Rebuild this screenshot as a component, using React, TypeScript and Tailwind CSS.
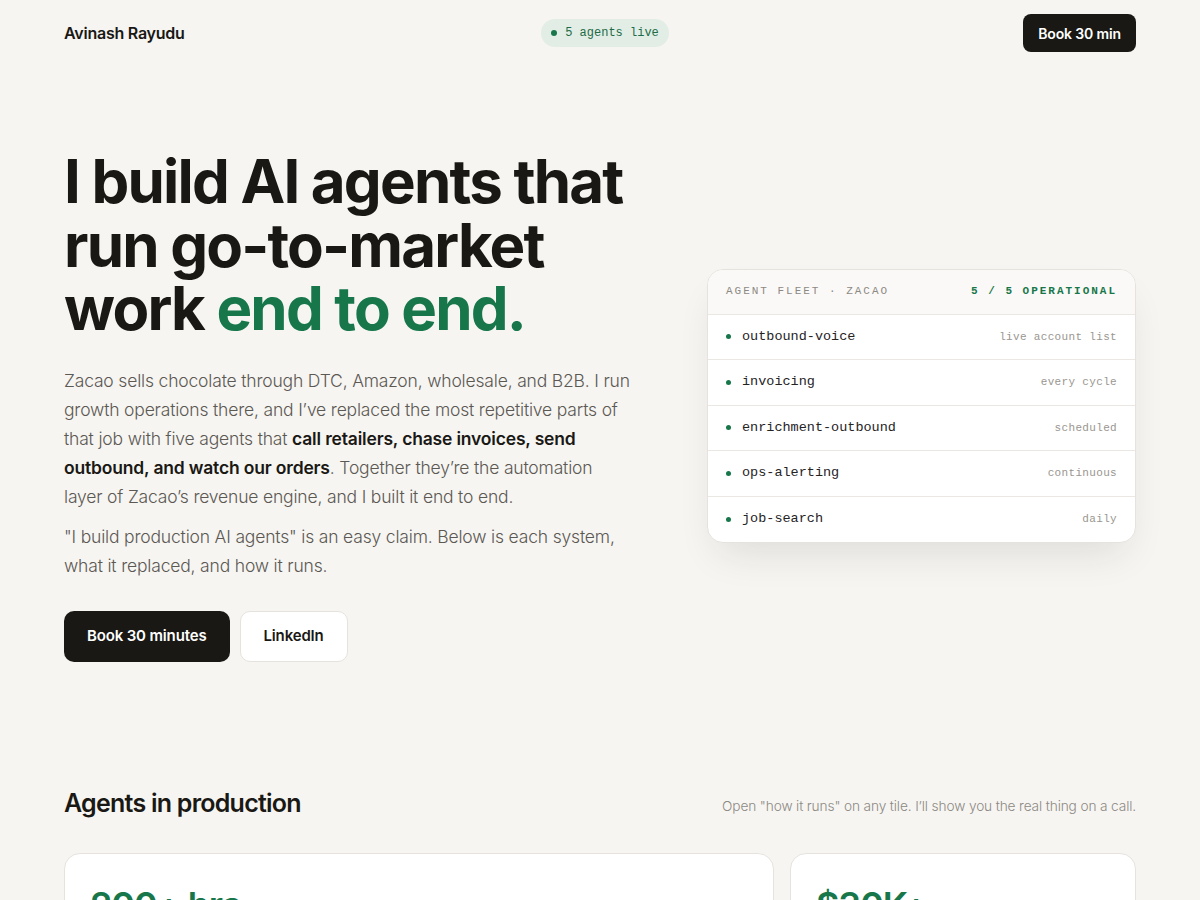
import React from "react";

interface Agent {
  name: string;
  cadence: string;
}

const agents: Agent[] = [
  { name: "outbound-voice", cadence: "live account list" },
  { name: "invoicing", cadence: "every cycle" },
  { name: "enrichment-outbound", cadence: "scheduled" },
  { name: "ops-alerting", cadence: "continuous" },
  { name: "job-search", cadence: "daily" },
];

export default function App() {
  return (
    <div className="min-h-screen bg-[#f6f5f2] text-[#1a1814] font-['Inter','Noto_Sans',sans-serif]">
      <div className="mx-auto w-[1072px]">
        {/* header */}
        <header className="flex h-[66px] items-center justify-between">
          <div className="w-[200px] text-[16px] font-semibold tracking-[-0.015em]">Avinash Rayudu</div>
          <div className="ml-[10px] flex items-center gap-2 rounded-full bg-[#e2eee5] px-[10px] py-[5px] font-['Liberation_Mono',monospace] text-[12px] text-[#1d6b47]">
            <span className="h-[6px] w-[6px] rounded-full bg-[#17774a]"></span>
            5 agents live
          </div>
          <div className="flex w-[200px] justify-end">
            <button className="h-[38px] rounded-lg bg-[#1a1814] px-[15px] text-[14px] font-semibold tracking-[-0.01em] text-white">
              Book 30 min
            </button>
          </div>
        </header>

        {/* hero */}
        <section className="flex items-center justify-between pt-[84px] pb-[123px]">
          <div className="w-[580px]">
            <h1 className="text-[60px] font-bold leading-[1.06] tracking-[-0.03em]">
              I build AI agents that run go-to-market work{" "}
              <span className="text-[#17774a]">end to end.</span>
            </h1>
            <p className="mt-[25px] w-[566px] text-[17.5px] font-light leading-[29px] tracking-[-0.01em] text-[#5c5852]">
              Zacao sells chocolate through DTC, Amazon, wholesale, and B2B. I run growth operations there, and I’ve
              replaced the most repetitive parts of that job with five agents that{" "}
              <strong className="font-semibold text-[#1a1814]">
                call retailers, chase invoices, send outbound, and watch our orders
              </strong>
              . Together they’re the automation layer of Zacao’s revenue engine, and I built it end to end.
            </p>
            <p className="mt-[11px] w-[566px] text-[17.5px] font-light leading-[29px] tracking-[-0.01em] text-[#5c5852]">
              "I build production AI agents" is an easy claim. Below is each system, what it replaced, and how it runs.
            </p>
            <div className="mt-[31px] flex gap-[10px]">
              <button className="h-[51px] rounded-[10px] bg-[#1a1814] px-[23px] text-[15px] font-semibold tracking-[-0.01em] text-white">
                Book 30 minutes
              </button>
              <button className="h-[51px] rounded-[10px] border border-[#e6e3de] bg-white px-[23px] text-[15px] font-semibold tracking-[-0.01em] text-[#1a1814]">
                LinkedIn
              </button>
            </div>
          </div>

          <div className="w-[429px] overflow-hidden rounded-2xl border border-[#e6e3de] bg-white shadow-[0_20px_40px_-12px_rgba(40,30,20,0.12)]">
            <div className="flex h-[45px] items-center justify-between border-b border-[#ebe8e3] bg-[#faf9f7] px-[18px] font-['Liberation_Mono',monospace] text-[11px] tracking-[0.18em]">
              <span className="text-[#8d8983]">AGENT FLEET · ZACAO</span>
              <span className="font-bold text-[#17774a]">5 / 5 OPERATIONAL</span>
            </div>
            {agents.map((a, i) => (
              <div
                key={a.name}
                className={`flex h-[45.5px] items-center justify-between px-[18px] font-['Liberation_Mono',monospace] ${
                  i < agents.length - 1 ? "border-b border-[#ebe8e3]" : ""
                }`}
              >
                <div className="flex items-center gap-[11px]">
                  <span className="h-[5px] w-[5px] rounded-full bg-[#17774a]"></span>
                  <span className="text-[13.5px] text-[#26231f]">{a.name}</span>
                </div>
                <span className="text-[11px] tracking-[0.03em] text-[#9a968f]">{a.cadence}</span>
              </div>
            ))}
          </div>
        </section>

        {/* agents in production */}
        <section>
          <div className="flex items-end justify-between">
            <h2 className="text-[25px] font-semibold tracking-[-0.03em]">Agents in production</h2>
            <p className="pb-[6px] text-[13.7px] font-light tracking-[-0.01em] text-[#8d8983]">
              Open "how it runs" on any tile. I’ll show you the real thing on a call.
            </p>
          </div>
          <div className="mt-[31px] grid grid-cols-[710px_1fr] gap-[16px]">
            <div className="h-[240px] rounded-2xl border border-[#e6e3de] bg-white px-[25px] pt-[24px]">
              <div className="text-[36px] font-semibold tracking-[-0.03em] text-[#17774a]">200+ hrs</div>
            </div>
            <div className="h-[240px] rounded-2xl border border-[#e6e3de] bg-white px-[25px] pt-[24px]">
              <div className="text-[36px] font-semibold tracking-[-0.03em] text-[#17774a]">$30K+</div>
            </div>
          </div>
        </section>
      </div>
    </div>
  );
}
